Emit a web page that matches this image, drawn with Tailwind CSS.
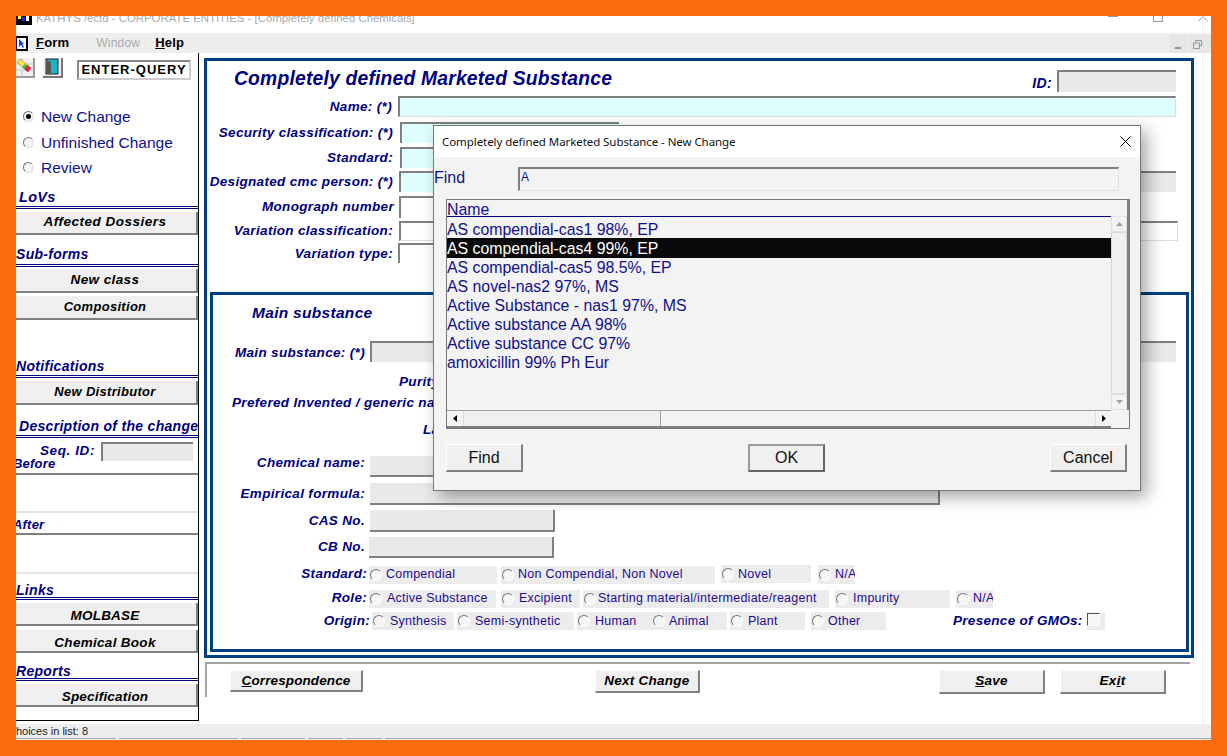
<!DOCTYPE html>
<html lang="en">
<head>
  <meta charset="UTF-8">
  <title>Completely defined Chemicals</title>
  <script src="https://cdn.jsdelivr.net/npm/@tailwindcss/browser@4"></script>
</head>
<body class="bg-[#fb6c10] h-screen overflow-hidden font-['Liberation_Sans',Arial,sans-serif] text-[#000080]">

  <div class="relative h-full p-4">
  <div class="h-full flex flex-col bg-white overflow-hidden">

    <!-- title bar -->
    <div class="h-[17px] shrink-0 flex items-start relative overflow-hidden">
      <svg class="w-[16px] h-[9px] shrink-0" viewBox="0 0 16 9"><rect width="16" height="9" fill="#000"/><rect x="2" y="0" width="3" height="3" fill="#ff0"/><rect x="6" y="1" width="3" height="4" fill="#22f"/><rect x="10" y="0" width="3" height="5" fill="#fff"/></svg>
      <span class="ml-[4px] -mt-[5px] text-[11.4px] leading-[14px] text-[#a9a9a9] whitespace-nowrap">KATHYS /ectd - CORPORATE ENTITIES - [Completely defined Chemicals]</span>
      <div class="ml-auto flex items-start gap-[35px] pr-[3px]">
        <div class="w-[10px] h-[1px] bg-[#999]"></div>
        <div class="w-[10px] h-[6px] border border-t-0 border-[#999]"></div>
        <svg class="w-[10px] h-[6px]" viewBox="0 0 10 6"><path d="M0 5.5L5 .5L10 5.5" fill="none" stroke="#999"/></svg>
      </div>
    </div>

    <!-- menu bar -->
    <div class="h-[20px] shrink-0 bg-[#eeeeee] flex items-center relative">
      <svg class="w-[12px] h-[15px] shrink-0" viewBox="0 0 12 15"><rect width="12" height="15" fill="#000"/><rect x="1" y="2" width="9" height="11" fill="#fff"/><path d="M3 3l5 5-2 0 2 3-1 1-2-3-2 2z" fill="#1a33ff"/></svg>
      <span class="ml-[8px] text-[13px] font-bold text-black tracking-[0.2px]"><u>F</u>orm</span>
      <span class="ml-[27px] text-[12px] text-[#a8a8a8] tracking-[0.2px]">Window</span>
      <span class="ml-[15px] text-[13px] font-bold text-black tracking-[0.2px]"><u>H</u>elp</span>
      <div class="ml-auto flex h-[18px] gap-[1px] self-end">
        <div class="w-[18px] bg-[#e6e6e6] flex items-end justify-center pb-[4px]"><div class="w-[6px] h-[2px] bg-[#8a98a8]"></div></div>
        <div class="w-[18px] bg-[#e6e6e6] flex items-center justify-center">
          <svg class="w-[9px] h-[9px]" viewBox="0 0 9 9"><path d="M2.5 2.5V.5h6v5H6.500M.5 3h6v5.500h-6z" fill="none" stroke="#8a98a8"/></svg>
        </div>
        <div class="w-[4px] bg-[#e6e6e6]"></div>
      </div>
    </div>

    <div class="flex-1 flex min-h-0">

      <!-- left sidebar -->
      <aside class="w-[183px] h-[668px] shrink-0 border-r border-b border-black overflow-hidden flex flex-col text-[13.5px]">
        <div class="h-[54px] shrink-0 flex items-start pt-[5px]">
          <div class="w-[19px] h-[20px] bg-[#efefef] border-r-2 border-b-2 border-[#9a9a9a] relative overflow-hidden">
            <svg class="w-[17px] h-[18px]" viewBox="0 0 17 18"><path d="M0 6h17M0 12h17M6 0v6M12 6v6M6 12v6" stroke="#c8c8c8" fill="none"/><path d="M1 4l3-3 11 9-3 4z" fill="#ffe93c" stroke="#666" stroke-width=".5"/><path d="M8 11l3-4 4 3-3 4z" fill="#e01b50"/><path d="M6 9l3-3 2 2-3 3z" fill="#3dbb45"/></svg>
          </div>
          <div class="ml-[8px] w-[20px] h-[20px] bg-[#efefef] border-r-2 border-b-2 border-[#777] flex items-center justify-center">
            <svg class="w-[16px] h-[18px]" viewBox="0 0 16 18"><rect x="2" y="1" width="12" height="15" fill="#18b6c6" stroke="#000" stroke-width=".8"/><path d="M2 2l5 2v13l-5-2z" fill="#555"/></svg>
          </div>
          <div class="ml-[14px] mt-[2px] w-[114px] h-[20px] border-2 border-t-[#888] border-l-[#888] border-r-[#ccc] border-b-[#ccc] flex items-center justify-center text-[13px] font-bold text-black tracking-[1px] whitespace-nowrap">ENTER-QUERY</div>
        </div>

        <div class="flex flex-col text-[15.5px] leading-[19px] pl-[7px] gap-[6.500px] text-[#10108a]">
          <label class="flex items-center gap-[7px] h-[19px]">
            <span class="w-[11px] h-[11px] rounded-full border border-t-[#777] border-l-[#777] border-r-[#ddd] border-b-[#ddd] bg-[#f4f4f4] flex items-center justify-center"><span class="w-[5px] h-[5px] rounded-full bg-black"></span></span>New Change</label>
          <label class="flex items-center gap-[7px] h-[19px]">
            <span class="w-[11px] h-[11px] rounded-full border border-t-[#777] border-l-[#777] border-r-[#ddd] border-b-[#ddd] bg-[#f4f4f4]"></span>Unfinished Change</label>
          <label class="flex items-center gap-[7px] h-[19px]">
            <span class="w-[11px] h-[11px] rounded-full border border-t-[#777] border-l-[#777] border-r-[#ddd] border-b-[#ddd] bg-[#f4f4f4]"></span>Review</label>
        </div>

        <h3 class="mt-[11px] pl-[3px] h-[18px] leading-[18px] text-[14.5px] font-bold italic tracking-[0.3px]">LoVs</h3>
        <div class="h-[3px] shrink-0 border-y border-[#000080]"></div>
        <button class="mt-[3px] pr-[2px] h-[23px] shrink-0 w-[182px] bg-[#efefef] border-r-2 border-b-2 border-[#808080] font-bold italic text-black tracking-[0.5px] text-[13.5px]">Affected Dossiers</button>

        <h3 class="mt-[10px] h-[19px] leading-[19px] text-[14px] font-bold italic tracking-[0.3px]">Sub-forms</h3>
        <div class="h-[3px] shrink-0 border-y border-[#000080]"></div>
        <button class="mt-[2px] pr-[2px] h-[24px] shrink-0 w-[182px] bg-[#efefef] border-r-2 border-b-2 border-[#808080] font-bold italic text-black tracking-[0.4px] text-[13.5px]">New class</button>
        <button class="mt-[3px] pr-[2px] h-[24px] shrink-0 w-[182px] bg-[#efefef] border-r-2 border-b-2 border-[#808080] font-bold italic text-black tracking-[0.3px] text-[13px]">Composition</button>

        <h3 class="mt-[35px] pt-[2px] h-[20px] leading-[18px] text-[14px] font-bold italic tracking-[0.3px]">Notifications</h3>
        <div class="h-[3px] shrink-0 border-y border-[#000080]"></div>
        <button class="mt-[3px] pr-[2px] h-[24px] shrink-0 w-[182px] bg-[#efefef] border-r-2 border-b-2 border-[#808080] font-bold italic text-black tracking-[0.3px] text-[13px]">New Distributor</button>

        <h3 class="mt-[10px] pl-[3px] pt-[2px] h-[20px] leading-[18px] text-[14px] font-bold italic tracking-[0.3px] whitespace-nowrap">Description of the change</h3>
        <div class="h-[3px] shrink-0 border-y border-[#000080]"></div>
        <div class="mt-[3px] h-[20px] shrink-0 flex items-center">
          <span class="w-[79px] text-right text-[13.5px] font-bold italic tracking-[0.6px]">Seq. ID:</span>
          <div class="ml-[6px] w-[92px] h-[19px] bg-[#e9e9e9] border-t-2 border-l-2 border-[#808080]"></div>
        </div>
        <div class="-ml-[3px] -mt-[3px] mb-[3px] h-[12px] leading-[12px] text-[13px] font-bold italic tracking-[0.2px] whitespace-nowrap">Before</div>
        <div class="h-[40px] shrink-0 border-t-2 border-b-2 border-t-[#808080] border-b-[#e4e4e4]"></div>
        <div class="-ml-[3px] mt-[3px] h-[17px] leading-[17px] text-[13px] font-bold italic tracking-[0.2px] whitespace-nowrap">After</div>
        <div class="h-[41px] shrink-0 border-t-2 border-b-2 border-t-[#808080] border-b-[#e4e4e4]"></div>

        <h3 class="mt-[7px] pt-[2px] h-[16px] leading-[14px] text-[14px] font-bold italic tracking-[0.3px]">Links</h3>
        <div class="h-[3px] shrink-0 border-y border-[#000080]"></div>
        <button class="mt-[3px] pr-[2px] pt-[3px] h-[23px] shrink-0 w-[182px] bg-[#efefef] border-r-2 border-b-2 border-[#808080] font-bold italic text-black tracking-[0.2px] text-[13.5px]">MOLBASE</button>
        <button class="mt-[4px] pr-[2px] pt-[3px] h-[23px] shrink-0 w-[182px] bg-[#efefef] border-r-2 border-b-2 border-[#808080] font-bold italic text-black tracking-[0.3px] text-[13.5px]">Chemical Book</button>

        <h3 class="mt-[9px] pt-[2px] h-[16px] leading-[14px] text-[14px] font-bold italic tracking-[0.3px]">Reports</h3>
        <div class="h-[3px] shrink-0 border-y border-[#000080]"></div>
        <button class="mt-[3px] pr-[2px] pt-[3px] h-[23px] shrink-0 w-[182px] bg-[#efefef] border-r-2 border-b-2 border-[#808080] font-bold italic text-black tracking-[0.2px] text-[13.5px]">Specification</button>
      </aside>

      <!-- main column -->
      <main class="flex-1 min-w-0 pl-[5px] pt-[5px]">
        <div class="w-[990px] h-[600px] border-[3px] border-[#003f80] text-[13.5px] font-bold italic tracking-[0.33px]">

          <div class="h-[35px] flex items-start pr-[15px]">
            <h1 class="pl-[27px] pt-[7px] text-[19.3px] leading-[22px] tracking-[0.2px]">Completely defined Marketed Substance</h1>
            <span class="ml-auto mt-[12px] text-[14px]">ID:</span>
            <div class="ml-[5px] mt-[9px] w-[119px] h-[22px] bg-[#e9e9e9] border-t-2 border-l-2 border-[#808080]"></div>
          </div>

          <div class="flex h-[21px] items-center">
            <span class="w-[185px] pt-[2px] text-right">Name: (*)</span>
            <div class="ml-[6px] w-[778px] h-[21px] bg-[#dfffff] border-t-2 border-l-2 border-[#808080] border-r border-b border-r-[#ddd] border-b-[#ddd]"></div>
          </div>
          <div class="flex h-[21px] items-center mt-[5px]">
            <span class="w-[186px] pt-[2px] text-right whitespace-nowrap">Security classification: (*)</span>
            <div class="ml-[7px] w-[219px] h-[21px] bg-[#dfffff] border-t-2 border-l-2 border-[#808080]"></div>
          </div>
          <div class="flex h-[21px] items-center mt-[4px]">
            <span class="w-[186px] pt-[2px] text-right">Standard:</span>
            <div class="ml-[7px] w-[219px] h-[21px] bg-[#dfffff] border-t-2 border-l-2 border-[#808080]"></div>
          </div>
          <div class="flex h-[21px] items-center mt-[3px]">
            <span class="w-[186px] pt-[2px] text-right whitespace-nowrap">Designated cmc person: (*)</span>
            <div class="ml-[6px] w-[220px] h-[21px] bg-[#dfffff] border-t-2 border-l-2 border-[#808080]"></div>
            <div class="ml-[40px] w-[517px] h-[21px] bg-[#e9e9e9] border-t-2 border-[#808080]"></div>
          </div>
          <div class="flex h-[22px] items-center mt-[4px]">
            <span class="w-[187px] text-right">Monograph number</span>
            <div class="ml-[5px] w-[220px] h-[22px] bg-white border-t-2 border-l-2 border-[#808080]"></div>
          </div>
          <div class="flex h-[20px] items-center mt-[3px]">
            <span class="w-[186px] text-right whitespace-nowrap">Variation classification:</span>
            <div class="ml-[6px] w-[779px] h-[20px] bg-white border-t-2 border-l-2 border-r border-b border-[#808080] border-r-[#ddd] border-b-[#ddd]"></div>
          </div>
          <div class="flex h-[20px] items-center mt-[2px]">
            <span class="w-[186px] pt-[2px] text-right">Variation type:</span>
            <div class="ml-[5px] w-[220px] h-[20px] bg-white border-t-2 border-l-2 border-[#808080]"></div>
          </div>

          <!-- main substance panel -->
          <section class="ml-[3px] mt-[29px] w-[979px] h-[360px] border-[3px] border-[#003f80]">
            <h2 class="h-[33px] pl-[39px] pt-[8px] text-[15.5px] leading-[20px] tracking-[0.3px]">Main substance</h2>

            <div class="flex h-[21px] items-center mt-[13px]">
              <span class="w-[152px] pt-[3px] text-right whitespace-nowrap">Main substance: (*)</span>
              <div class="ml-[5px] w-[806px] h-[21px] bg-[#e9e9e9] border-t-2 border-l-2 border-[#808080]"></div>
            </div>
            <div class="h-[20px] mt-[10px] pl-[186px] leading-[20px]">Purity:</div>
            <div class="h-[20px] mt-[1px] pl-[19px] leading-[20px] whitespace-nowrap">Prefered Invented / generic name:</div>
            <div class="h-[20px] mt-[7px] pl-[210px] leading-[20px]">Language:</div>

            <div class="flex h-[21px] items-center mt-[16px]">
              <span class="w-[152px] text-right pb-[6px]">Chemical name:</span>
              <div class="ml-[5px] w-[570px] h-[21px] bg-[#e9e9e9] border-b-2 border-[#808080]"></div>
            </div>
            <div class="flex h-[22px] items-center mt-[6px]">
              <span class="w-[152px] text-right">Empirical formula:</span>
              <div class="ml-[5px] w-[570px] h-[22px] bg-[#e9e9e9] border-b-2 border-r-2 border-[#808080]"></div>
            </div>
            <div class="flex h-[22px] items-center mt-[5px]">
              <span class="w-[152px] text-right">CAS No.</span>
              <div class="ml-[5px] w-[185px] h-[22px] bg-[#e9e9e9] border-b-2 border-r-2 border-[#808080]"></div>
            </div>
            <div class="flex h-[21px] items-center mt-[5px]">
              <span class="w-[152px] text-right">CB No.</span>
              <div class="ml-[4px] w-[185px] h-[21px] bg-[#e9e9e9] border-b-2 border-r-2 border-[#808080]"></div>
            </div>

            <!-- radio groups -->
            <div class="flex h-[19px] items-center mt-[7px] font-normal not-italic text-[12.5px] text-[#1f0a90] tracking-[0.25px]">
              <span class="w-[156px] pr-[2px] text-right text-[13.5px] font-bold italic text-[#000080] tracking-[0.3px]">Standard:</span>
              <label class="w-[128px] h-[18px] bg-[#ececec] flex items-center gap-[4px] pl-[1px]"><span class="w-[12px] h-[12px] rounded-full border border-t-[#777] border-l-[#777] border-r-white border-b-white bg-[#f6f6f6]"></span>Compendial</label>
              <label class="ml-[4px] w-[214px] h-[18px] bg-[#ececec] flex items-center gap-[4px] pl-[1px]"><span class="w-[12px] h-[12px] rounded-full border border-t-[#777] border-l-[#777] border-r-white border-b-white bg-[#f6f6f6]"></span>Non Compendial, Non Novel</label>
              <label class="ml-[6px] w-[90px] h-[18px] bg-[#ececec] flex items-center gap-[4px] pl-[1px] -mt-[1px]"><span class="w-[12px] h-[12px] rounded-full border border-t-[#777] border-l-[#777] border-r-white border-b-white bg-[#f6f6f6]"></span>Novel</label>
              <label class="ml-[7px] w-[37px] h-[19px] bg-[#ececec] flex items-center gap-[4px] pl-[1px] overflow-hidden whitespace-nowrap"><span class="w-[12px] h-[12px] shrink-0 rounded-full border border-t-[#777] border-l-[#777] border-r-white border-b-white bg-[#f6f6f6]"></span>N/A</label>
            </div>
            <div class="flex h-[19px] items-center mt-[5px] font-normal not-italic text-[12.5px] text-[#1f0a90] tracking-[0.25px]">
              <span class="w-[156px] pr-[2px] text-right text-[13.5px] font-bold italic text-[#000080] tracking-[0.3px]">Role:</span>
              <label class="w-[127px] h-[18px] bg-[#ececec] flex items-center gap-[5px] pl-[1px] whitespace-nowrap"><span class="w-[12px] h-[12px] rounded-full border border-t-[#777] border-l-[#777] border-r-white border-b-white bg-[#f6f6f6]"></span>Active Substance</label>
              <label class="ml-[5px] w-[79px] h-[18px] bg-[#ececec] flex items-center gap-[5px] pl-[1px]"><span class="w-[12px] h-[12px] rounded-full border border-t-[#777] border-l-[#777] border-r-white border-b-white bg-[#f6f6f6]"></span>Excipient</label>
              <label class="ml-[3px] w-[246px] h-[18px] bg-[#ececec] flex items-center gap-[2px] pl-[1px] whitespace-nowrap"><span class="w-[12px] h-[12px] rounded-full border border-t-[#777] border-l-[#777] border-r-white border-b-white bg-[#f6f6f6]"></span>Starting material/intermediate/reagent</label>
              <label class="ml-[6px] w-[115px] h-[18px] bg-[#ececec] flex items-center gap-[5px] pl-[1px]"><span class="w-[12px] h-[12px] rounded-full border border-t-[#777] border-l-[#777] border-r-white border-b-white bg-[#f6f6f6]"></span>Impurity</label>
              <label class="ml-[6px] w-[37px] h-[18px] bg-[#ececec] flex items-center gap-[4px] pl-[1px] overflow-hidden whitespace-nowrap"><span class="w-[12px] h-[12px] shrink-0 rounded-full border border-t-[#777] border-l-[#777] border-r-white border-b-white bg-[#f6f6f6]"></span>N/A</label>
            </div>
            <div class="flex h-[18px] items-center mt-[4px] font-normal not-italic text-[12.5px] text-[#1f0a90] tracking-[0.25px]">
              <span class="w-[159px] pr-[2px] text-right text-[13.5px] font-bold italic text-[#000080] tracking-[0.3px]">Origin:</span>
              <label class="w-[82px] h-[18px] bg-[#ececec] flex items-center gap-[5px] pl-[1px]"><span class="w-[12px] h-[12px] rounded-full border border-t-[#777] border-l-[#777] border-r-white border-b-white bg-[#f6f6f6]"></span>Synthesis</label>
              <label class="ml-[3px] w-[117px] h-[18px] bg-[#ececec] flex items-center gap-[5px] pl-[1px] whitespace-nowrap"><span class="w-[12px] h-[12px] rounded-full border border-t-[#777] border-l-[#777] border-r-white border-b-white bg-[#f6f6f6]"></span>Semi-synthetic</label>
              <label class="ml-[3px] w-[73px] h-[18px] bg-[#ececec] flex items-center gap-[5px] pl-[1px]"><span class="w-[12px] h-[12px] rounded-full border border-t-[#777] border-l-[#777] border-r-white border-b-white bg-[#f6f6f6]"></span>Human</label>
              <label class="w-[77px] h-[18px] bg-[#ececec] flex items-center gap-[4px] pl-[3px]"><span class="w-[12px] h-[12px] rounded-full border border-t-[#777] border-l-[#777] border-r-white border-b-white bg-[#f6f6f6]"></span>Animal</label>
              <label class="ml-[3px] w-[75px] h-[18px] bg-[#ececec] flex items-center gap-[5px] pl-[1px]"><span class="w-[12px] h-[12px] rounded-full border border-t-[#777] border-l-[#777] border-r-white border-b-white bg-[#f6f6f6]"></span>Plant</label>
              <label class="ml-[6px] w-[75px] h-[18px] bg-[#ececec] flex items-center gap-[4px] pl-[1px]"><span class="w-[12px] h-[12px] rounded-full border border-t-[#777] border-l-[#777] border-r-white border-b-white bg-[#f6f6f6]"></span>Other</label>
              <span class="ml-[67px] text-[13.5px] font-bold italic text-[#000080] tracking-[0.3px] whitespace-nowrap">Presence of GMOs:</span>
              <span class="ml-[4px] w-[18px] h-[18px] bg-[#ececec] flex items-start">
                <span class="w-[13px] h-[13px] mt-[1px] border border-t-[#555] border-l-[#555] border-r-white border-b-white bg-[#f6f6f6]"></span>
              </span>
            </div>
          </section>
        </div>

        <!-- bottom buttons -->
        <div class="mt-[4px] w-[985px] ml-[1px] h-[35px] border-t-2 border-l-2 border-[#a3a3a3] flex items-start text-[13.5px] font-bold italic text-black tracking-[0.25px]">
          <button class="ml-[23px] mt-[6px] w-[133px] h-[22px] bg-[#efefef] border-t border-l border-white border-r-2 border-b-2 border-r-[#808080] border-b-[#808080] tracking-[0.12px]"><u>C</u>orrespondence</button>
          <button class="ml-[232px] mt-[6px] w-[105px] h-[23px] bg-[#efefef] border-t border-l border-white border-r-2 border-b-2 border-r-[#808080] border-b-[#808080]">Next Change</button>
          <button class="ml-[239px] mt-[6px] w-[106px] h-[24px] bg-[#efefef] border-t border-l border-white border-r-2 border-b-2 border-r-[#808080] border-b-[#808080]"><u>S</u>ave</button>
          <button class="ml-[15px] mt-[6px] w-[106px] h-[24px] bg-[#efefef] border-t border-l border-white border-r-2 border-b-2 border-r-[#808080] border-b-[#808080]">Ex<u>i</u>t</button>
        </div>
      </main>
    </div>

    <!-- status bar -->
    <div class="h-[16px] shrink-0 bg-[#eeeeee] flex flex-col">
      <div class="h-[14px] leading-[14px] text-[11px] text-[#222] -ml-[8px] whitespace-nowrap">Choices in list: 8</div>
      <div class="h-[2px] flex gap-[3px]">
        <div class="w-[100px] border-t border-[#a8a8a8]"></div>
        <div class="w-[119px] border-t border-[#a8a8a8]"></div>
        <div class="w-[64px] border-t border-[#a8a8a8]"></div>
        <div class="w-[35px] border-t border-[#a8a8a8]"></div>
        <div class="w-[36px] border-t border-[#a8a8a8]"></div>
        <div class="flex-1 border-t border-[#a8a8a8]"></div>
      </div>
    </div>
  </div>

  <!-- list of values dialog -->
  <div class="absolute left-[433px] top-[125px] w-[708px] h-[366px] bg-[#f3f3f3] border border-[#777] shadow-[6px_6px_16px_rgba(0,0,0,0.35)] flex flex-col">
    <div class="h-[31px] shrink-0 bg-white flex items-center pl-[8px] pr-[9px] text-[11.5px] text-[#111] font-['Noto_Sans',sans-serif]">
      <span class="tracking-[-0.07px]">Completely defined Marketed Substance - New Change</span>
      <svg class="ml-auto w-[11px] h-[11px]" viewBox="0 0 11 11"><path d="M.5.500l10 10M10.500.500l-10 10" stroke="#000" fill="none"/></svg>
    </div>
    <div class="h-[24px] mt-[10px] shrink-0 flex items-center text-[16px] text-[#10108a]">
      <span class="w-[84px] pb-[2px]">Find</span>
      <div class="w-[601px] h-[24px] border-t-2 border-l-2 border-[#808080] border-r border-b border-r-[#e0e0e0] border-b-[#e0e0e0] text-[12px] leading-[16px] pl-[1px]">A</div>
    </div>
    <div class="ml-[12px] mt-[8px] w-[684px] h-[230px] shrink-0 border border-[#777] flex flex-col text-[15.85px] leading-[21px] text-[#10108a]">
      <div class="flex-1 flex min-h-0">
        <div class="w-[664px]">
          <div class="h-[17px] leading-[20px] border-b border-[#000080]">Name</div>
          <div class="mt-[2px]">
            <div class="h-[19px]">AS compendial-cas1 98%, EP</div>
            <div class="h-[20px] bg-[#0a0a0a] text-white">AS compendial-cas4 99%, EP</div>
            <div class="h-[19px] leading-[19px]">AS compendial-cas5 98.5%, EP</div>
            <div class="h-[19px] leading-[19px]">AS novel-nas2 97%, MS</div>
            <div class="h-[19px] leading-[19px]">Active Substance - nas1 97%, MS</div>
            <div class="h-[19px] leading-[19px]">Active substance AA 98%</div>
            <div class="h-[19px] leading-[19px]">Active substance CC 97%</div>
            <div class="h-[19px] leading-[19px]">amoxicillin 99% Ph Eur</div>
          </div>
        </div>
        <!-- vertical scrollbar -->
        <div class="w-[18px] pt-[16px] border-r-2 border-[#808080] flex flex-col">
          <div class="h-[16px] bg-[#f3f3f3] border border-[#e0e0e0] flex items-center justify-center"><svg class="w-[7px] h-[4px]" viewBox="0 0 7 4"><path d="M3.500 0L7 4H0z" fill="#a0a0a0"/></svg></div>
          <div class="flex-1 bg-[#f0f0f0] border border-[#d8d8d8]"></div>
          <div class="h-[16px] bg-[#f3f3f3] border border-[#e0e0e0] flex items-center justify-center"><svg class="w-[7px] h-[4px]" viewBox="0 0 7 4"><path d="M0 0H7L3.500 4z" fill="#a0a0a0"/></svg></div>
        </div>
      </div>
      <!-- horizontal scrollbar -->
      <div class="h-[18px] shrink-0 flex">
        <div class="w-[664px] flex border-t border-[#a0a0a0] border-b-2 border-b-[#808080]">
          <div class="w-[17px] border-r border-[#ddd] flex items-center justify-center"><svg class="w-[4px] h-[7px]" viewBox="0 0 4 7"><path d="M4 0V7L0 3.500z" fill="#000"/></svg></div>
          <div class="w-[197px] bg-[#efefef] border-r border-[#a0a0a0]"></div>
          <div class="flex-1"></div>
          <div class="w-[16px] flex items-center justify-center border-l border-[#ddd]"><svg class="w-[4px] h-[7px]" viewBox="0 0 4 7"><path d="M0 0V7L4 3.500z" fill="#000"/></svg></div>
        </div>
      </div>
    </div>
    <div class="mt-[15px] ml-[12px] w-[681px] flex justify-between text-[16px] text-[#111]">
      <button class="w-[77px] h-[28px] bg-[#f0f0f0] border-t border-l border-white border-r-2 border-b-2 border-r-[#808080] border-b-[#808080]">Find</button>
      <button class="w-[77px] h-[28px] bg-[#f0f0f0] border-2 border-t-[#999] border-l-[#999] border-r-[#666] border-b-[#666]">OK</button>
      <button class="w-[77px] h-[28px] bg-[#f0f0f0] border-t border-l border-white border-r-2 border-b-2 border-r-[#808080] border-b-[#808080]">Cancel</button>
    </div>
  </div>
  </div>

</body>
</html>
